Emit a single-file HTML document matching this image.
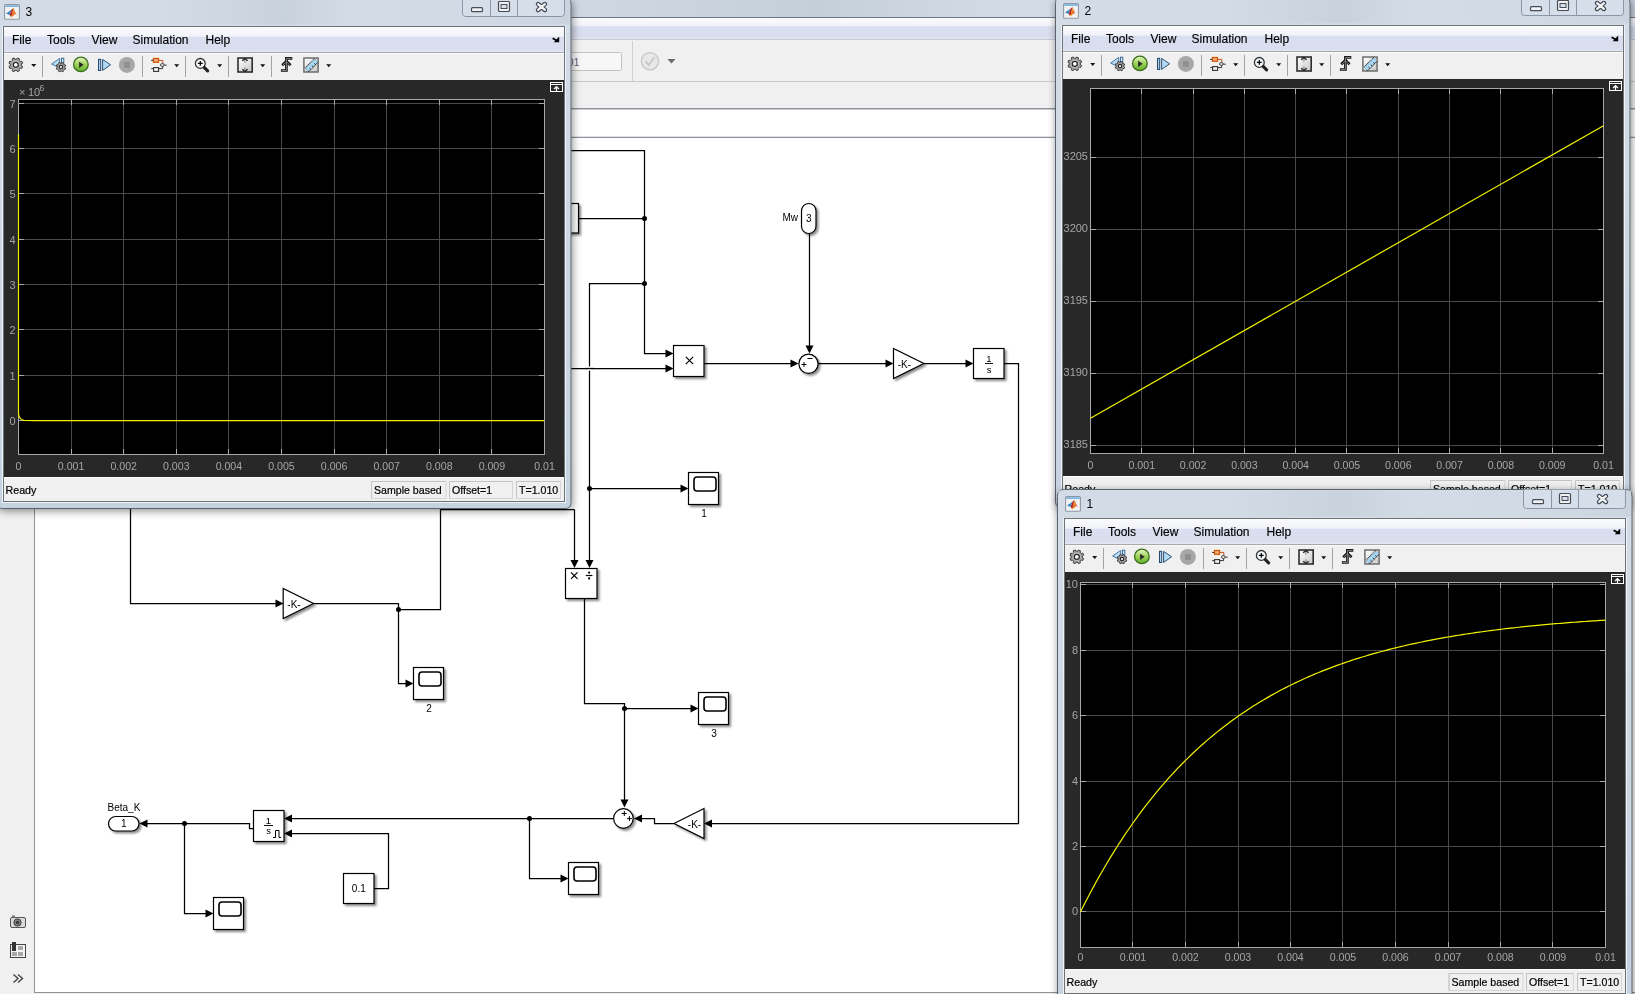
<!DOCTYPE html><html><head><meta charset="utf-8"><style>html,body{margin:0;padding:0;overflow:hidden;background:#fff;}svg{display:block;will-change:transform;}</style></head><body><svg width="1635" height="994" viewBox="0 0 1635 994" shape-rendering="auto">
<defs>
<linearGradient id="gMenu" x1="0" y1="0" x2="0" y2="1">
 <stop offset="0" stop-color="#fbfbfd"/><stop offset="0.36" stop-color="#f1f3f9"/>
 <stop offset="0.42" stop-color="#d9dff0"/><stop offset="0.9" stop-color="#d9deef"/><stop offset="1" stop-color="#e4e7f3"/>
</linearGradient>
<linearGradient id="gAero" x1="0" y1="0" x2="1" y2="0">
 <stop offset="0" stop-color="#d3dce6"/><stop offset="0.3" stop-color="#d2dbe5"/><stop offset="0.5" stop-color="#c5cfda"/><stop offset="0.62" stop-color="#d3dce6"/><stop offset="0.85" stop-color="#d0d9e3"/><stop offset="1" stop-color="#c8d2dd"/>
</linearGradient>
<linearGradient id="gAeroV" x1="0" y1="0" x2="0" y2="1">
 <stop offset="0" stop-color="#d5dde7"/><stop offset="1" stop-color="#c6d2df"/>
</linearGradient>
<linearGradient id="gSide" x1="0" y1="0" x2="1" y2="0">
 <stop offset="0" stop-color="#c3d0df"/><stop offset="0.5" stop-color="#dbe4ee"/><stop offset="1" stop-color="#c7d3e1"/>
</linearGradient>
<linearGradient id="gPlay" x1="0" y1="0" x2="0" y2="1">
 <stop offset="0" stop-color="#e6f7c8"/><stop offset="0.5" stop-color="#9fd25a"/><stop offset="1" stop-color="#5fae2a"/>
</linearGradient>
<linearGradient id="gScale" x1="0" y1="0" x2="1" y2="1">
 <stop offset="0" stop-color="#ffffff"/><stop offset="1" stop-color="#c8c8c8"/>
</linearGradient>
<filter id="fBlk" x="-30%" y="-30%" width="170%" height="170%">
 <feGaussianBlur in="SourceAlpha" stdDeviation="1.3"/><feOffset dx="2" dy="2" result="o"/>
 <feComponentTransfer><feFuncA type="linear" slope="0.45"/></feComponentTransfer>
 <feMerge><feMergeNode/><feMergeNode in="SourceGraphic"/></feMerge>
</filter>
<filter id="fWin" x="-5%" y="-5%" width="110%" height="110%">
 <feGaussianBlur in="SourceAlpha" stdDeviation="4"/><feOffset dx="1" dy="2" result="o"/>
 <feComponentTransfer><feFuncA type="linear" slope="0.45"/></feComponentTransfer>
 <feMerge><feMergeNode/><feMergeNode in="SourceGraphic"/></feMerge>
</filter>
</defs>
<rect x="0" y="0" width="1635" height="994" fill="#ffffff" />
<rect x="0" y="0" width="1635" height="17" fill="url(#gAero)" />
<line x1="0" y1="17.5" x2="1635" y2="17.5" stroke="#6e7682" stroke-width="1"/>
<rect x="0" y="18" width="1635" height="21" fill="url(#gMenu)" />
<line x1="0" y1="39.5" x2="1635" y2="39.5" stroke="#c6c9d2" stroke-width="1"/>
<rect x="0" y="40" width="1635" height="41" fill="#f0f0f0" />
<line x1="0" y1="81.5" x2="1635" y2="81.5" stroke="#c9c9c9" stroke-width="1"/>
<rect x="0" y="82" width="1635" height="26" fill="#f0f0f0" />
<rect x="0" y="108" width="1635" height="1" fill="#8e949c" />
<rect x="0" y="109" width="1635" height="1" fill="#c6cace" />
<rect x="0" y="110" width="1635" height="27" fill="#ffffff" />
<rect x="0" y="136" width="1635" height="1" fill="#dfe1e4" />
<rect x="0" y="137" width="1635" height="1" fill="#8e949c" />
<rect x="540.5" y="52.5" width="81" height="18" rx="2" fill="#f7f7f7" stroke="#c3c3c3"/>
<text x="567.5" y="66" font-family="Liberation Sans" font-size="11" fill="#6a5a7a" text-anchor="start" >01</text>
<line x1="632.5" y1="41" x2="632.5" y2="81" stroke="#cfcfcf" stroke-width="1"/>
<circle cx="650" cy="61.2" r="8.6" fill="#e8e8e8" stroke="#c4c4c4" stroke-width="1.2"/>
<path d="M645.5,61.5 L648.8,65 L654.5,57.2" fill="none" stroke="#c9c9c9" stroke-width="2"/>
<path d="M667.5,59 L675.5,59 L671.5,63.5 Z" fill="#6a6a6a"/>
<rect x="0" y="138" width="34" height="856" fill="#f0f0f0" />
<line x1="34.5" y1="138" x2="34.5" y2="993" stroke="#8e949c" stroke-width="1"/>
<line x1="34" y1="992.5" x2="1635" y2="992.5" stroke="#8e949c" stroke-width="1"/>
<rect x="0" y="993" width="1635" height="1" fill="#f0f0f0" />
<g transform="translate(10,915)"><rect x="0.5" y="2.5" width="15" height="10" rx="1.5" fill="#d9d9d9" stroke="#555"/><rect x="2" y="0.5" width="3" height="2" fill="#777"/><circle cx="7.5" cy="7.5" r="3.6" fill="#8a8a8a" stroke="#333"/><circle cx="7.5" cy="7.5" r="1.8" fill="#3a3a3a"/></g>
<g transform="translate(10,942)"><rect x="0.5" y="2.5" width="15" height="13" fill="#f4f4f4" stroke="#444"/><rect x="2" y="0" width="4" height="9" fill="#333"/><rect x="8" y="4" width="5" height="4" fill="#a8a8a8"/><rect x="2" y="10" width="5" height="4" fill="#a8a8a8"/><rect x="8" y="10" width="5" height="4" fill="#a8a8a8"/></g>
<path d="M13.5,974.5 L18,978.5 L13.5,982.5 M18,974.5 L22.5,978.5 L18,982.5" fill="none" stroke="#444" stroke-width="1.4"/>
<path d="M560,150.5 L644.5,150.5 L644.5,353.5 L667,353.5" fill="none" stroke="#000" stroke-width="1.25" stroke-linejoin="miter"/>
<polygon points="673.5,353.5 665.5,349.5 665.5,357.5" fill="#000"/>
<path d="M578,218.5 L644.5,218.5" fill="none" stroke="#000" stroke-width="1.25" stroke-linejoin="miter"/>
<circle cx="644.5" cy="218.5" r="2.5" fill="#000"/>
<path d="M644.5,283.5 L589.5,283.5 L589.5,561" fill="none" stroke="#000" stroke-width="1.25" stroke-linejoin="miter"/>
<circle cx="644.5" cy="283.5" r="2.5" fill="#000"/>
<polygon points="589.5,568 585.5,560 593.5,560" fill="#000"/>
<path d="M560,368.5 L667,368.5" fill="none" stroke="#000" stroke-width="1.25" stroke-linejoin="miter"/>
<polygon points="673.5,368.5 665.5,364.5 665.5,372.5" fill="#000"/>
<rect x="588.2" y="366.4" width="2.6" height="4.2" fill="#fff"/>
<path d="M585,368.5 L594,368.5" fill="none" stroke="#000" stroke-width="1.25" stroke-linejoin="miter"/>
<path d="M589.5,488.5 L682,488.5" fill="none" stroke="#000" stroke-width="1.25" stroke-linejoin="miter"/>
<circle cx="589.5" cy="488.5" r="2.5" fill="#000"/>
<polygon points="688.5,488.5 680.5,484.5 680.5,492.5" fill="#000"/>
<path d="M704,363.5 L792,363.5" fill="none" stroke="#000" stroke-width="1.25" stroke-linejoin="miter"/>
<polygon points="798.5,363.5 790.5,359.5 790.5,367.5" fill="#000"/>
<path d="M809.5,233 L809.5,346" fill="none" stroke="#000" stroke-width="1.25" stroke-linejoin="miter"/>
<polygon points="809.5,353.5 805.5,345.5 813.5,345.5" fill="#000"/>
<path d="M818,363.5 L886.5,363.5" fill="none" stroke="#000" stroke-width="1.25" stroke-linejoin="miter"/>
<polygon points="893.5,363.5 885.5,359.5 885.5,367.5" fill="#000"/>
<path d="M924,363.5 L966.5,363.5" fill="none" stroke="#000" stroke-width="1.25" stroke-linejoin="miter"/>
<polygon points="973.5,363.5 965.5,359.5 965.5,367.5" fill="#000"/>
<path d="M1004,363.5 L1018.5,363.5 L1018.5,823.5 L711,823.5" fill="none" stroke="#000" stroke-width="1.25" stroke-linejoin="miter"/>
<polygon points="704,823.5 712,819.5 712,827.5" fill="#000"/>
<path d="M674,823.5 L654.5,823.5 L654.5,818.5 L641,818.5" fill="none" stroke="#000" stroke-width="1.25" stroke-linejoin="miter"/>
<polygon points="634,818.5 642,814.5 642,822.5" fill="#000"/>
<path d="M574.5,509.5 L574.5,561" fill="none" stroke="#000" stroke-width="1.25" stroke-linejoin="miter"/>
<polygon points="574.5,568 570.5,560 578.5,560" fill="#000"/>
<path d="M440.5,509.5 L574.5,509.5" fill="none" stroke="#000" stroke-width="1.25" stroke-linejoin="miter"/>
<path d="M584.5,598 L584.5,703.5 L624.5,703.5 L624.5,800" fill="none" stroke="#000" stroke-width="1.25" stroke-linejoin="miter"/>
<polygon points="624.5,807.5 620.5,799.5 628.5,799.5" fill="#000"/>
<path d="M624.5,708.5 L692,708.5" fill="none" stroke="#000" stroke-width="1.25" stroke-linejoin="miter"/>
<circle cx="624.5" cy="708.5" r="2.5" fill="#000"/>
<polygon points="698.5,708.5 690.5,704.5 690.5,712.5" fill="#000"/>
<path d="M613,818.5 L291,818.5" fill="none" stroke="#000" stroke-width="1.25" stroke-linejoin="miter"/>
<polygon points="284,818.5 292,814.5 292,822.5" fill="#000"/>
<path d="M529.5,818.5 L529.5,878.5 L561.5,878.5" fill="none" stroke="#000" stroke-width="1.25" stroke-linejoin="miter"/>
<circle cx="529.5" cy="818.5" r="2.5" fill="#000"/>
<polygon points="568.5,878.5 560.5,874.5 560.5,882.5" fill="#000"/>
<path d="M374,888.5 L388.5,888.5 L388.5,833.5 L291,833.5" fill="none" stroke="#000" stroke-width="1.25" stroke-linejoin="miter"/>
<polygon points="284,833.5 292,829.5 292,837.5" fill="#000"/>
<path d="M254,828.5 L249.5,828.5 L249.5,823.5 L146.5,823.5" fill="none" stroke="#000" stroke-width="1.25" stroke-linejoin="miter"/>
<polygon points="139.5,823.5 147.5,819.5 147.5,827.5" fill="#000"/>
<path d="M184.5,823.5 L184.5,913.5 L206.5,913.5" fill="none" stroke="#000" stroke-width="1.25" stroke-linejoin="miter"/>
<circle cx="184.5" cy="823.5" r="2.5" fill="#000"/>
<polygon points="213.5,913.5 205.5,909.5 205.5,917.5" fill="#000"/>
<path d="M130.5,509 L130.5,603.5 L276.5,603.5" fill="none" stroke="#000" stroke-width="1.25" stroke-linejoin="miter"/>
<polygon points="283.5,603.5 275.5,599.5 275.5,607.5" fill="#000"/>
<path d="M313.5,603.5 L398.5,603.5 L398.5,683.5 L406.5,683.5" fill="none" stroke="#000" stroke-width="1.25" stroke-linejoin="miter"/>
<polygon points="413.5,683.5 405.5,679.5 405.5,687.5" fill="#000"/>
<path d="M398.5,609.5 L440.5,609.5 L440.5,509" fill="none" stroke="#000" stroke-width="1.25" stroke-linejoin="miter"/>
<circle cx="398.5" cy="609.5" r="2.5" fill="#000"/>
<g filter="url(#fBlk)"><rect x="540" y="203.5" width="38.5" height="29.5" fill="#fff" stroke="#000" stroke-width="1.2"/></g>
<g filter="url(#fBlk)"><rect x="673.5" y="345.5" width="30.5" height="31.0" fill="#fff" stroke="#000" stroke-width="1.2"/></g>
<path d="M685.8,356.8 L693.2,364.2 M693.2,356.8 L685.8,364.2" stroke="#000" stroke-width="1.2"/>
<g filter="url(#fBlk)"><rect x="801.5" y="203.5" width="14.5" height="30" rx="7.25" ry="7.25" fill="#fff" stroke="#000" stroke-width="1.2"/></g>
<text x="808.75" y="222.1" font-family="Liberation Sans" font-size="10" fill="#000" text-anchor="middle" >3</text>
<text x="798" y="221" font-family="Liberation Sans" font-size="10" fill="#000" text-anchor="end" >Mw</text>
<g filter="url(#fBlk)"><circle cx="808.5" cy="363.8" r="9.6" fill="#fff" stroke="#000" stroke-width="1.2"/></g>
<path d="M801.5,364.5 L806.5,364.5 M804,362.0 L804,367.0" stroke="#000" stroke-width="1"/>
<path d="M807.5,358.5 L812.5,358.5" stroke="#000" stroke-width="1"/>
<g filter="url(#fBlk)"><polygon points="893.5,348.5 923.8,363.5 893.5,378.5" fill="#fff" stroke="#000" stroke-width="1.2" stroke-linejoin="miter"/></g>
<text x="904.3" y="367.5" font-family="Liberation Sans" font-size="10" fill="#000" text-anchor="middle" >-K-</text>
<g filter="url(#fBlk)"><rect x="973.5" y="348.5" width="30.5" height="30.0" fill="#fff" stroke="#000" stroke-width="1.2"/></g>
<text x="989" y="362" font-family="Liberation Sans" font-size="9.5" fill="#000" text-anchor="middle" >1</text>
<line x1="985" y1="363.5" x2="993" y2="363.5" stroke="#111" stroke-width="1"/>
<text x="989" y="373" font-family="Liberation Sans" font-size="9.5" fill="#000" text-anchor="middle" >s</text>
<g filter="url(#fBlk)"><rect x="688.5" y="472.5" width="30.0" height="32.0" fill="#fff" stroke="#000" stroke-width="1.2"/></g>
<rect x="694.0" y="477.0" width="22" height="14" rx="3" fill="#fff" stroke="#000" stroke-width="1.6"/>
<text x="704.0" y="517.0" font-family="Liberation Sans" font-size="10" fill="#000" text-anchor="middle" >1</text>
<g filter="url(#fBlk)"><rect x="565.5" y="568.5" width="31.5" height="30.0" fill="#fff" stroke="#000" stroke-width="1.2"/></g>
<path d="M571,572.3 L577.5,578.8 M577.5,572.3 L571,578.8" stroke="#000" stroke-width="1.2"/>
<path d="M585.8,575.5 L592.4,575.5" stroke="#000" stroke-width="1.2"/><circle cx="589.1" cy="572.6" r="1.1"/><circle cx="589.1" cy="578.4" r="1.1"/>
<g filter="url(#fBlk)"><rect x="698.5" y="692.5" width="30.0" height="32.0" fill="#fff" stroke="#000" stroke-width="1.2"/></g>
<rect x="704.0" y="697.0" width="22" height="14" rx="3" fill="#fff" stroke="#000" stroke-width="1.6"/>
<text x="714.0" y="737.0" font-family="Liberation Sans" font-size="10" fill="#000" text-anchor="middle" >3</text>
<g filter="url(#fBlk)"><circle cx="623.4" cy="818.5" r="9.8" fill="#fff" stroke="#000" stroke-width="1.2"/></g>
<path d="M621.8,813.5 L626.8,813.5 M624.3,811.0 L624.3,816.0" stroke="#000" stroke-width="1"/>
<path d="M626.9,818.6 L631.9,818.6 M629.4,816.1 L629.4,821.1" stroke="#000" stroke-width="1"/>
<g filter="url(#fBlk)"><polygon points="704,808.5 674,823.5 704,838.5" fill="#fff" stroke="#000" stroke-width="1.2" stroke-linejoin="miter"/></g>
<text x="694.5" y="827.5" font-family="Liberation Sans" font-size="10" fill="#000" text-anchor="middle" >-K-</text>
<g filter="url(#fBlk)"><rect x="568.5" y="862.5" width="30.0" height="32.0" fill="#fff" stroke="#000" stroke-width="1.2"/></g>
<rect x="574.0" y="867.0" width="22" height="14" rx="3" fill="#fff" stroke="#000" stroke-width="1.6"/>
<g filter="url(#fBlk)"><rect x="253.5" y="810.5" width="30.5" height="31.0" fill="#fff" stroke="#000" stroke-width="1.2"/></g>
<text x="268.5" y="824" font-family="Liberation Sans" font-size="9.5" fill="#000" text-anchor="middle" >1</text>
<line x1="264" y1="825.5" x2="273" y2="825.5" stroke="#111" stroke-width="1"/>
<text x="268.5" y="834" font-family="Liberation Sans" font-size="9.5" fill="#000" text-anchor="middle" >s</text>
<path d="M273,837.5 L275.5,837.5 L275.5,830.5 L279,830.5 L279,837.5 L281,837.5" fill="none" stroke="#000" stroke-width="1"/>
<g filter="url(#fBlk)"><rect x="343.5" y="873.5" width="30.5" height="30.0" fill="#fff" stroke="#000" stroke-width="1.2"/></g>
<text x="358.8" y="891.5" font-family="Liberation Sans" font-size="10" fill="#000" text-anchor="middle" >0.1</text>
<g filter="url(#fBlk)"><rect x="213.5" y="897.5" width="30.0" height="32.0" fill="#fff" stroke="#000" stroke-width="1.2"/></g>
<rect x="219.0" y="902.0" width="22" height="14" rx="3" fill="#fff" stroke="#000" stroke-width="1.6"/>
<g filter="url(#fBlk)"><rect x="108.5" y="816.5" width="30.5" height="14.5" rx="7.25" ry="7.25" fill="#fff" stroke="#000" stroke-width="1.2"/></g>
<text x="123.75" y="827.35" font-family="Liberation Sans" font-size="10" fill="#000" text-anchor="middle" >1</text>
<text x="107.5" y="810.5" font-family="Liberation Sans" font-size="10" fill="#000" text-anchor="start" >Beta_K</text>
<g filter="url(#fBlk)"><rect x="413.5" y="667.5" width="30.0" height="32.0" fill="#fff" stroke="#000" stroke-width="1.2"/></g>
<rect x="419.0" y="672.0" width="22" height="14" rx="3" fill="#fff" stroke="#000" stroke-width="1.6"/>
<text x="429.0" y="712.0" font-family="Liberation Sans" font-size="10" fill="#000" text-anchor="middle" >2</text>
<g filter="url(#fBlk)"><polygon points="283.2,588.5 313.5,603.5 283.2,618.5" fill="#fff" stroke="#000" stroke-width="1.2" stroke-linejoin="miter"/></g>
<text x="294.0" y="607.5" font-family="Liberation Sans" font-size="10" fill="#000" text-anchor="middle" >-K-</text>
<g filter="url(#fWin)"><path d="M-3.5,502.5 L-3.5,4.5 Q-3.5,-2.5 3.5,-2.5 L564,-2.5 Q571,-2.5 571,4.5 L571,502.5 Q571,508.5 565,508.5 L2.5,508.5 Q-3.5,508.5 -3.5,502.5 Z" fill="url(#gAeroV)" stroke="#59626e" stroke-width="1"/></g>
<rect x="-2.5" y="-1.5" width="572.5" height="26" fill="url(#gAero)" opacity="0.8"/>
<rect x="2.5" y="26.5" width="563" height="476" fill="none" stroke="#eef3f8" stroke-width="1"/>
<g transform="translate(4,4)"><rect x="0.6" y="0.6" width="14.8" height="14.6" rx="1" fill="#f2f2f2" stroke="#8e98a4" stroke-width="1.1"/><rect x="1.2" y="1.2" width="13.6" height="1.8" fill="#7fb6e2"/><path d="M2,9.5 L7.5,5.8 L5.6,10.9 Z" fill="#3b86c8"/><path d="M7.5,5.8 L9.5,4 L8.6,8.2 L7.3,13.3 L5.6,10.9 Z" fill="#b8281c"/><path d="M9.5,4 L11.2,9.8 L9.6,11.6 L7.3,13.3 L8.6,8.2 Z" fill="#e8731f"/><path d="M9.5,4 L12.7,11.7 L11.2,9.8 Z" fill="#d0402a"/><path d="M9.4,4.6 L10,7.5 L9.2,8.5 Z" fill="#f2c531"/><path d="M6.6,12.2 L7.3,13.3 L8.2,12 Z" fill="#f2b531"/></g>
<text x="25.5" y="15.5" font-family="Liberation Sans" font-size="12" fill="#000" text-anchor="start" >3</text>
<path d="M462.5,-2.5 L462.5,13.5 Q462.5,16.5 465.5,16.5 L561.5,16.5 Q564.5,16.5 564.5,13.5 L564.5,-2.5" fill="#d5dee9" stroke="#8a96a6" stroke-width="1"/>
<line x1="490.5" y1="-2.5" x2="490.5" y2="16.5" stroke="#8a96a6" stroke-width="1"/>
<line x1="517.5" y1="-2.5" x2="517.5" y2="16.5" stroke="#8a96a6" stroke-width="1"/>
<rect x="471.5" y="7.699999999999999" width="11" height="4" rx="1" fill="#f2f2f2" stroke="#454c5a" stroke-width="1.2"/>
<rect x="498.5" y="1.5" width="11" height="10" rx="1" fill="#f2f2f2" stroke="#454c5a" stroke-width="1.2"/>
<rect x="501" y="4.5" width="6" height="4" fill="#d5dee9" stroke="#454c5a" stroke-width="1"/>
<path d="M538.1,4.1 L544.9,9.9 M544.9,4.1 L538.1,9.9" stroke="#454c5a" stroke-width="4.6" stroke-linecap="round"/>
<path d="M538.1,4.1 L544.9,9.9 M544.9,4.1 L538.1,9.9" stroke="#f4f4f4" stroke-width="2.2" stroke-linecap="round"/>
<rect x="3" y="26" width="562" height="476" fill="#6e7378" />
<rect x="4" y="27" width="560" height="25" fill="url(#gMenu)" />
<rect x="4" y="52" width="560" height="1" fill="#a8a8a8" />
<rect x="4" y="53" width="560" height="27" fill="#f0f0f0" />
<rect x="4" y="53" width="560" height="1" fill="#fafafa" />
<rect x="4" y="80" width="560" height="397" fill="#282828" />
<rect x="4" y="477" width="560" height="24" fill="#f0f0f0" />
<rect x="4" y="477" width="560" height="1" fill="#fdfdfd" />
<text x="12" y="44" font-family="Liberation Sans" font-size="12" fill="#000" text-anchor="start" stroke="#000" stroke-width="0.15">File</text>
<text x="47" y="44" font-family="Liberation Sans" font-size="12" fill="#000" text-anchor="start" stroke="#000" stroke-width="0.15">Tools</text>
<text x="91.5" y="44" font-family="Liberation Sans" font-size="12" fill="#000" text-anchor="start" stroke="#000" stroke-width="0.15">View</text>
<text x="132.5" y="44" font-family="Liberation Sans" font-size="12" fill="#000" text-anchor="start" stroke="#000" stroke-width="0.15">Simulation</text>
<text x="205.5" y="44" font-family="Liberation Sans" font-size="12" fill="#000" text-anchor="start" stroke="#000" stroke-width="0.15">Help</text>
<path d="M552.6,38.2 L557.6,41" stroke="#000" stroke-width="1.7"/><path d="M559.2,36.6 L559.2,42.2 L553.8,42.2 Z" fill="#000"/>
<path d="M21.40,64.80 L21.31,65.81 L22.62,66.38 L21.74,68.50 L20.41,67.98 L19.76,68.76 L18.98,69.41 L19.50,70.74 L17.38,71.62 L16.81,70.31 L15.80,70.40 L14.79,70.31 L14.22,71.62 L12.10,70.74 L12.62,69.41 L11.84,68.76 L11.19,67.98 L9.86,68.50 L8.98,66.38 L10.29,65.81 L10.20,64.80 L10.29,63.79 L8.98,63.22 L9.86,61.10 L11.19,61.62 L11.84,60.84 L12.62,60.19 L12.10,58.86 L14.22,57.98 L14.79,59.29 L15.80,59.20 L16.81,59.29 L17.38,57.98 L19.50,58.86 L18.98,60.19 L19.76,60.84 L20.41,61.62 L21.74,61.10 L22.62,63.22 L21.31,63.79 Z" fill="#a9a9a9" stroke="#3a3a3a" stroke-width="1" stroke-linejoin="round"/>
<circle cx="15.8" cy="64.8" r="4.2" fill="#d4d4d4" stroke="#8a8a8a" stroke-width="0.6"/>
<circle cx="15.8" cy="64.8" r="2.52" fill="#ffffff" stroke="#262626" stroke-width="1.3"/>
<path d="M31.2,64 L36.2,64 L33.7,67 Z" fill="#111"/>
<line x1="42.5" y1="56" x2="42.5" y2="77" stroke="#a3a3a3" stroke-width="1"/>
<line x1="142.5" y1="56" x2="142.5" y2="77" stroke="#a3a3a3" stroke-width="1"/>
<line x1="185.5" y1="56" x2="185.5" y2="77" stroke="#a3a3a3" stroke-width="1"/>
<line x1="228.5" y1="56" x2="228.5" y2="77" stroke="#a3a3a3" stroke-width="1"/>
<line x1="271.5" y1="56" x2="271.5" y2="77" stroke="#a3a3a3" stroke-width="1"/>
<path d="M51.6,64 L59.7,58.4 L59.7,68 Z" fill="#b6dcf3" stroke="#4a7aa6" stroke-width="1" stroke-linejoin="round"/>
<rect x="61.4" y="58.2" width="2.4" height="7" fill="#cfe8f7" stroke="#2f5f8c" stroke-width="0.9"/>
<path d="M64.84,67.10 L64.78,67.79 L65.68,68.18 L65.07,69.64 L64.16,69.28 L63.72,69.82 L63.18,70.26 L63.54,71.17 L62.08,71.78 L61.69,70.88 L61.00,70.94 L60.31,70.88 L59.92,71.78 L58.46,71.17 L58.82,70.26 L58.28,69.82 L57.84,69.28 L56.93,69.64 L56.32,68.18 L57.22,67.79 L57.16,67.10 L57.22,66.41 L56.32,66.02 L56.93,64.56 L57.84,64.92 L58.28,64.38 L58.82,63.94 L58.46,63.03 L59.92,62.42 L60.31,63.32 L61.00,63.26 L61.69,63.32 L62.08,62.42 L63.54,63.03 L63.18,63.94 L63.72,64.38 L64.16,64.92 L65.07,64.56 L65.68,66.02 L64.78,66.41 Z" fill="#a9a9a9" stroke="#3a3a3a" stroke-width="1" stroke-linejoin="round"/>
<circle cx="61" cy="67.1" r="2.88" fill="#d4d4d4" stroke="#8a8a8a" stroke-width="0.6"/>
<circle cx="61" cy="67.1" r="1.728" fill="#ffffff" stroke="#262626" stroke-width="1.3"/>
<circle cx="80.9" cy="64.4" r="7.3" fill="url(#gPlay)" stroke="#3b6e1c" stroke-width="1.3"/>
<path d="M79.1,61.7 L83.6,64.8 L79.1,68.1 Z" fill="#262626"/>
<rect x="98.5" y="59.3" width="2.2" height="11.2" fill="#a9d3ef" stroke="#27476a" stroke-width="1"/>
<path d="M102.6,59.4 L110.6,64.8 L102.6,70.4 Z" fill="#b3daf3" stroke="#2c5278" stroke-width="1" stroke-linejoin="round"/>
<circle cx="126.9" cy="64.9" r="8" fill="#a7a7a7"/>
<rect x="124.1" y="62.1" width="5.8" height="5.8" fill="#8f8f8f"/>
<rect x="152.2" y="57.2" width="7.6" height="6.3" rx="1.5" fill="#fff1a8" opacity="0.8"/>
<rect x="153.5" y="58.5" width="5" height="3.8" fill="#f3b070" stroke="#c8501a" stroke-width="1.2"/>
<path d="M151.2,60.4 L153,60.4" stroke="#222" stroke-width="1"/>
<path d="M159,60.4 L162.8,60.4 L162.8,63.4" fill="none" stroke="#c8501a" stroke-width="1"/>
<rect x="160.6" y="63.7" width="3.5" height="2.6" rx="1.2" fill="#fff" stroke="#333" stroke-width="1"/>
<path d="M164.3,65.2 L166.7,65.2" stroke="#333" stroke-width="1"/>
<rect x="153.6" y="67.6" width="5" height="3.8" fill="#f4f4f4" stroke="#333" stroke-width="1.1"/>
<path d="M151.2,68.6 L153.2,68.6 M158.8,68.6 L162.6,68.6 L162.6,66.5" fill="none" stroke="#333" stroke-width="1"/>
<path d="M174.2,64.2 L179.2,64.2 L176.7,67.2 Z" fill="#111"/>
<circle cx="200.3" cy="63.4" r="4.9" fill="#f2f6fa" stroke="#333" stroke-width="1.3"/>
<path d="M197.9,63.4 L202.7,63.4 M200.3,61 L200.3,65.8" stroke="#000" stroke-width="1.2"/>
<path d="M204.4,67.7 L207.6,70.8" stroke="#222" stroke-width="3.2" stroke-linecap="round"/>
<path d="M217.2,64.2 L222.2,64.2 L219.7,67.2 Z" fill="#111"/>
<rect x="238" y="58" width="14.2" height="14" fill="url(#gScale)" stroke="#2e2e2e" stroke-width="1.6"/>
<path d="M244.9,59.2 L244.9,62.8 M244.9,67.2 L244.9,70.6" stroke="#8a8a8a" stroke-width="1.2"/>
<path d="M242.2,60.8 L244.9,58.4 L247.6,60.8 M242.2,69.2 L244.9,71.5 L247.6,69.2" fill="none" stroke="#222" stroke-width="1.3"/>
<path d="M260.2,64.2 L265.2,64.2 L262.7,67.2 Z" fill="#111"/>
<path d="M280.9,70.5 L286.4,70.5 L286.4,58.4 L292.3,58.4" fill="none" stroke="#111" stroke-width="2.7"/>
<path d="M282.2,65.2 L286.4,61.4 L290.6,65.2" fill="none" stroke="#111" stroke-width="2.7"/>
<path d="M281.6,70.5 L286.4,70.5 L286.4,58.4 L291.6,58.4 M282.9,65 L286.4,61.9 L289.9,65" fill="none" stroke="#8e8e96" stroke-width="0.9"/>
<rect x="303.9" y="58" width="14.2" height="14" fill="url(#gScale)" stroke="#6e6e6e" stroke-width="1.5"/>
<path d="M306.6,70 L316.6,60.2" stroke="#1e1e1e" stroke-width="6" stroke-dasharray="1 0.6"/>
<path d="M306.6,70 L316.6,60.2" stroke="#a6d6f1" stroke-width="4.4"/>
<path d="M309.5,68.2 L310.8,69.4 M311.9,65.8 L313.2,67 M314.3,63.4 L315.6,64.6" stroke="#222" stroke-width="0.9"/>
<path d="M326.2,64.2 L331.2,64.2 L328.7,67.2 Z" fill="#111"/>
<rect x="550.5" y="82.5" width="12" height="9" fill="none" stroke="#fff" stroke-width="1"/>
<path d="M551,84.5 L562,84.5" stroke="#fff"/><path d="M554,89 L556.5,86.5 L559,89 M556.5,87 L556.5,91" fill="none" stroke="#fff" stroke-width="1.2"/>
<rect x="18" y="99" width="527" height="356" fill="#000" />
<line x1="71.5" y1="99" x2="71.5" y2="455" stroke="#4a4a4a" stroke-width="1"/>
<line x1="123.5" y1="99" x2="123.5" y2="455" stroke="#4a4a4a" stroke-width="1"/>
<line x1="176.5" y1="99" x2="176.5" y2="455" stroke="#4a4a4a" stroke-width="1"/>
<line x1="228.5" y1="99" x2="228.5" y2="455" stroke="#4a4a4a" stroke-width="1"/>
<line x1="281.5" y1="99" x2="281.5" y2="455" stroke="#4a4a4a" stroke-width="1"/>
<line x1="334.5" y1="99" x2="334.5" y2="455" stroke="#4a4a4a" stroke-width="1"/>
<line x1="386.5" y1="99" x2="386.5" y2="455" stroke="#4a4a4a" stroke-width="1"/>
<line x1="439.5" y1="99" x2="439.5" y2="455" stroke="#4a4a4a" stroke-width="1"/>
<line x1="491.5" y1="99" x2="491.5" y2="455" stroke="#4a4a4a" stroke-width="1"/>
<line x1="18" y1="420.5" x2="545" y2="420.5" stroke="#4a4a4a" stroke-width="1"/>
<line x1="18" y1="375.5" x2="545" y2="375.5" stroke="#4a4a4a" stroke-width="1"/>
<line x1="18" y1="329.5" x2="545" y2="329.5" stroke="#4a4a4a" stroke-width="1"/>
<line x1="18" y1="284.5" x2="545" y2="284.5" stroke="#4a4a4a" stroke-width="1"/>
<line x1="18" y1="239.5" x2="545" y2="239.5" stroke="#4a4a4a" stroke-width="1"/>
<line x1="18" y1="193.5" x2="545" y2="193.5" stroke="#4a4a4a" stroke-width="1"/>
<line x1="18" y1="148.5" x2="545" y2="148.5" stroke="#4a4a4a" stroke-width="1"/>
<line x1="18" y1="103.5" x2="545" y2="103.5" stroke="#4a4a4a" stroke-width="1"/>
<rect x="18.5" y="99.5" width="526" height="355" fill="none" stroke="#a8a8a8" stroke-width="1"/>
<line x1="71.5" y1="454" x2="71.5" y2="449" stroke="#a8a8a8"/>
<line x1="71.5" y1="100" x2="71.5" y2="105" stroke="#a8a8a8"/>
<line x1="123.5" y1="454" x2="123.5" y2="449" stroke="#a8a8a8"/>
<line x1="123.5" y1="100" x2="123.5" y2="105" stroke="#a8a8a8"/>
<line x1="176.5" y1="454" x2="176.5" y2="449" stroke="#a8a8a8"/>
<line x1="176.5" y1="100" x2="176.5" y2="105" stroke="#a8a8a8"/>
<line x1="228.5" y1="454" x2="228.5" y2="449" stroke="#a8a8a8"/>
<line x1="228.5" y1="100" x2="228.5" y2="105" stroke="#a8a8a8"/>
<line x1="281.5" y1="454" x2="281.5" y2="449" stroke="#a8a8a8"/>
<line x1="281.5" y1="100" x2="281.5" y2="105" stroke="#a8a8a8"/>
<line x1="334.5" y1="454" x2="334.5" y2="449" stroke="#a8a8a8"/>
<line x1="334.5" y1="100" x2="334.5" y2="105" stroke="#a8a8a8"/>
<line x1="386.5" y1="454" x2="386.5" y2="449" stroke="#a8a8a8"/>
<line x1="386.5" y1="100" x2="386.5" y2="105" stroke="#a8a8a8"/>
<line x1="439.5" y1="454" x2="439.5" y2="449" stroke="#a8a8a8"/>
<line x1="439.5" y1="100" x2="439.5" y2="105" stroke="#a8a8a8"/>
<line x1="491.5" y1="454" x2="491.5" y2="449" stroke="#a8a8a8"/>
<line x1="491.5" y1="100" x2="491.5" y2="105" stroke="#a8a8a8"/>
<line x1="19" y1="420.5" x2="24" y2="420.5" stroke="#a8a8a8"/>
<line x1="544" y1="420.5" x2="539" y2="420.5" stroke="#a8a8a8"/>
<line x1="19" y1="375.5" x2="24" y2="375.5" stroke="#a8a8a8"/>
<line x1="544" y1="375.5" x2="539" y2="375.5" stroke="#a8a8a8"/>
<line x1="19" y1="329.5" x2="24" y2="329.5" stroke="#a8a8a8"/>
<line x1="544" y1="329.5" x2="539" y2="329.5" stroke="#a8a8a8"/>
<line x1="19" y1="284.5" x2="24" y2="284.5" stroke="#a8a8a8"/>
<line x1="544" y1="284.5" x2="539" y2="284.5" stroke="#a8a8a8"/>
<line x1="19" y1="239.5" x2="24" y2="239.5" stroke="#a8a8a8"/>
<line x1="544" y1="239.5" x2="539" y2="239.5" stroke="#a8a8a8"/>
<line x1="19" y1="193.5" x2="24" y2="193.5" stroke="#a8a8a8"/>
<line x1="544" y1="193.5" x2="539" y2="193.5" stroke="#a8a8a8"/>
<line x1="19" y1="148.5" x2="24" y2="148.5" stroke="#a8a8a8"/>
<line x1="544" y1="148.5" x2="539" y2="148.5" stroke="#a8a8a8"/>
<line x1="19" y1="103.5" x2="24" y2="103.5" stroke="#a8a8a8"/>
<line x1="544" y1="103.5" x2="539" y2="103.5" stroke="#a8a8a8"/>
<path d="M18.5,134.3 L18.5,414 Q19.2,419.6 24,420.3 L35,420.6 L544,420.6" fill="none" stroke="#f2f200" stroke-width="1.2"/>
<text x="18.5" y="469.5" font-family="Liberation Sans" font-size="10.6" fill="#a5a5a5" text-anchor="middle" >0</text>
<text x="71.1" y="469.5" font-family="Liberation Sans" font-size="10.6" fill="#a5a5a5" text-anchor="middle" >0.001</text>
<text x="123.7" y="469.5" font-family="Liberation Sans" font-size="10.6" fill="#a5a5a5" text-anchor="middle" >0.002</text>
<text x="176.3" y="469.5" font-family="Liberation Sans" font-size="10.6" fill="#a5a5a5" text-anchor="middle" >0.003</text>
<text x="228.9" y="469.5" font-family="Liberation Sans" font-size="10.6" fill="#a5a5a5" text-anchor="middle" >0.004</text>
<text x="281.5" y="469.5" font-family="Liberation Sans" font-size="10.6" fill="#a5a5a5" text-anchor="middle" >0.005</text>
<text x="334.1" y="469.5" font-family="Liberation Sans" font-size="10.6" fill="#a5a5a5" text-anchor="middle" >0.006</text>
<text x="386.7" y="469.5" font-family="Liberation Sans" font-size="10.6" fill="#a5a5a5" text-anchor="middle" >0.007</text>
<text x="439.3" y="469.5" font-family="Liberation Sans" font-size="10.6" fill="#a5a5a5" text-anchor="middle" >0.008</text>
<text x="491.9" y="469.5" font-family="Liberation Sans" font-size="10.6" fill="#a5a5a5" text-anchor="middle" >0.009</text>
<text x="544.5" y="469.5" font-family="Liberation Sans" font-size="10.6" fill="#a5a5a5" text-anchor="middle" >0.01</text>
<text x="15.5" y="425.0" font-family="Liberation Sans" font-size="11" fill="#a5a5a5" text-anchor="end" >0</text>
<text x="15.5" y="380.0" font-family="Liberation Sans" font-size="11" fill="#a5a5a5" text-anchor="end" >1</text>
<text x="15.5" y="334.0" font-family="Liberation Sans" font-size="11" fill="#a5a5a5" text-anchor="end" >2</text>
<text x="15.5" y="289.0" font-family="Liberation Sans" font-size="11" fill="#a5a5a5" text-anchor="end" >3</text>
<text x="15.5" y="244.0" font-family="Liberation Sans" font-size="11" fill="#a5a5a5" text-anchor="end" >4</text>
<text x="15.5" y="198.0" font-family="Liberation Sans" font-size="11" fill="#a5a5a5" text-anchor="end" >5</text>
<text x="15.5" y="153.0" font-family="Liberation Sans" font-size="11" fill="#a5a5a5" text-anchor="end" >6</text>
<text x="15.5" y="108.0" font-family="Liberation Sans" font-size="11" fill="#a5a5a5" text-anchor="end" >7</text>
<text x="19" y="96" font-family="Liberation Sans" font-size="11" fill="#a5a5a5" text-anchor="start" >×</text>
<text x="28" y="96" font-family="Liberation Sans" font-size="11" fill="#a5a5a5" text-anchor="start" >10</text>
<text x="39.6" y="90.6" font-family="Liberation Sans" font-size="8.6" fill="#a5a5a5" text-anchor="start" >6</text>
<text x="5.5" y="493.6" font-family="Liberation Sans" font-size="10.7" fill="#000" text-anchor="start" stroke="#000" stroke-width="0.2">Ready</text>
<rect x="371.5" y="481.5" width="74.5" height="17" fill="#f0f0f0" stroke="#d5d5d5"/>
<path d="M371.5,498.5 L371.5,481.5 L446.0,481.5" fill="none" stroke="#c4c4c4"/>
<text x="374" y="494" font-family="Liberation Sans" font-size="10.6" fill="#000" text-anchor="start" stroke="#000" stroke-width="0.2">Sample based</text>
<rect x="449.5" y="481.5" width="63" height="17" fill="#f0f0f0" stroke="#d5d5d5"/>
<path d="M449.5,498.5 L449.5,481.5 L512.5,481.5" fill="none" stroke="#c4c4c4"/>
<text x="452" y="494" font-family="Liberation Sans" font-size="10.6" fill="#000" text-anchor="start" stroke="#000" stroke-width="0.2">Offset=1</text>
<rect x="516.5" y="481.5" width="44" height="17" fill="#f0f0f0" stroke="#d5d5d5"/>
<path d="M516.5,498.5 L516.5,481.5 L560.5,481.5" fill="none" stroke="#c4c4c4"/>
<text x="519" y="494" font-family="Liberation Sans" font-size="10.6" fill="#000" text-anchor="start" stroke="#000" stroke-width="0.2">T=1.010</text>
<g filter="url(#fWin)"><path d="M1055.5,501.5 L1055.5,3.5 Q1055.5,-3.5 1062.5,-3.5 L1623,-3.5 Q1630,-3.5 1630,3.5 L1630,501.5 Q1630,507.5 1624,507.5 L1061.5,507.5 Q1055.5,507.5 1055.5,501.5 Z" fill="url(#gAeroV)" stroke="#59626e" stroke-width="1"/></g>
<rect x="1056.5" y="-2.5" width="572.5" height="26" fill="url(#gAero)" opacity="0.8"/>
<rect x="1061.5" y="25.5" width="563" height="476" fill="none" stroke="#eef3f8" stroke-width="1"/>
<g transform="translate(1063,3)"><rect x="0.6" y="0.6" width="14.8" height="14.6" rx="1" fill="#f2f2f2" stroke="#8e98a4" stroke-width="1.1"/><rect x="1.2" y="1.2" width="13.6" height="1.8" fill="#7fb6e2"/><path d="M2,9.5 L7.5,5.8 L5.6,10.9 Z" fill="#3b86c8"/><path d="M7.5,5.8 L9.5,4 L8.6,8.2 L7.3,13.3 L5.6,10.9 Z" fill="#b8281c"/><path d="M9.5,4 L11.2,9.8 L9.6,11.6 L7.3,13.3 L8.6,8.2 Z" fill="#e8731f"/><path d="M9.5,4 L12.7,11.7 L11.2,9.8 Z" fill="#d0402a"/><path d="M9.4,4.6 L10,7.5 L9.2,8.5 Z" fill="#f2c531"/><path d="M6.6,12.2 L7.3,13.3 L8.2,12 Z" fill="#f2b531"/></g>
<text x="1084.5" y="14.5" font-family="Liberation Sans" font-size="12" fill="#000" text-anchor="start" >2</text>
<path d="M1521.5,-3.5 L1521.5,12.5 Q1521.5,15.5 1524.5,15.5 L1620.5,15.5 Q1623.5,15.5 1623.5,12.5 L1623.5,-3.5" fill="#d5dee9" stroke="#8a96a6" stroke-width="1"/>
<line x1="1549.5" y1="-3.5" x2="1549.5" y2="15.5" stroke="#8a96a6" stroke-width="1"/>
<line x1="1576.5" y1="-3.5" x2="1576.5" y2="15.5" stroke="#8a96a6" stroke-width="1"/>
<rect x="1530.5" y="6.699999999999999" width="11" height="4" rx="1" fill="#f2f2f2" stroke="#454c5a" stroke-width="1.2"/>
<rect x="1557.5" y="0.5" width="11" height="10" rx="1" fill="#f2f2f2" stroke="#454c5a" stroke-width="1.2"/>
<rect x="1560" y="3.5" width="6" height="4" fill="#d5dee9" stroke="#454c5a" stroke-width="1"/>
<path d="M1597.1,3.1 L1603.9,8.9 M1603.9,3.1 L1597.1,8.9" stroke="#454c5a" stroke-width="4.6" stroke-linecap="round"/>
<path d="M1597.1,3.1 L1603.9,8.9 M1603.9,3.1 L1597.1,8.9" stroke="#f4f4f4" stroke-width="2.2" stroke-linecap="round"/>
<rect x="1062" y="25" width="562" height="476" fill="#6e7378" />
<rect x="1063" y="26" width="560" height="25" fill="url(#gMenu)" />
<rect x="1063" y="51" width="560" height="1" fill="#a8a8a8" />
<rect x="1063" y="52" width="560" height="27" fill="#f0f0f0" />
<rect x="1063" y="52" width="560" height="1" fill="#fafafa" />
<rect x="1063" y="79" width="560" height="397" fill="#282828" />
<rect x="1063" y="476" width="560" height="24" fill="#f0f0f0" />
<rect x="1063" y="476" width="560" height="1" fill="#fdfdfd" />
<text x="1071" y="43" font-family="Liberation Sans" font-size="12" fill="#000" text-anchor="start" stroke="#000" stroke-width="0.15">File</text>
<text x="1106" y="43" font-family="Liberation Sans" font-size="12" fill="#000" text-anchor="start" stroke="#000" stroke-width="0.15">Tools</text>
<text x="1150.5" y="43" font-family="Liberation Sans" font-size="12" fill="#000" text-anchor="start" stroke="#000" stroke-width="0.15">View</text>
<text x="1191.5" y="43" font-family="Liberation Sans" font-size="12" fill="#000" text-anchor="start" stroke="#000" stroke-width="0.15">Simulation</text>
<text x="1264.5" y="43" font-family="Liberation Sans" font-size="12" fill="#000" text-anchor="start" stroke="#000" stroke-width="0.15">Help</text>
<path d="M1611.6,37.2 L1616.6,40" stroke="#000" stroke-width="1.7"/><path d="M1618.2,35.6 L1618.2,41.2 L1612.8,41.2 Z" fill="#000"/>
<path d="M1080.40,63.80 L1080.31,64.81 L1081.62,65.38 L1080.74,67.50 L1079.41,66.98 L1078.76,67.76 L1077.98,68.41 L1078.50,69.74 L1076.38,70.62 L1075.81,69.31 L1074.80,69.40 L1073.79,69.31 L1073.22,70.62 L1071.10,69.74 L1071.62,68.41 L1070.84,67.76 L1070.19,66.98 L1068.86,67.50 L1067.98,65.38 L1069.29,64.81 L1069.20,63.80 L1069.29,62.79 L1067.98,62.22 L1068.86,60.10 L1070.19,60.62 L1070.84,59.84 L1071.62,59.19 L1071.10,57.86 L1073.22,56.98 L1073.79,58.29 L1074.80,58.20 L1075.81,58.29 L1076.38,56.98 L1078.50,57.86 L1077.98,59.19 L1078.76,59.84 L1079.41,60.62 L1080.74,60.10 L1081.62,62.22 L1080.31,62.79 Z" fill="#a9a9a9" stroke="#3a3a3a" stroke-width="1" stroke-linejoin="round"/>
<circle cx="1074.8" cy="63.8" r="4.2" fill="#d4d4d4" stroke="#8a8a8a" stroke-width="0.6"/>
<circle cx="1074.8" cy="63.8" r="2.52" fill="#ffffff" stroke="#262626" stroke-width="1.3"/>
<path d="M1090.2,63 L1095.2,63 L1092.7,66 Z" fill="#111"/>
<line x1="1101.5" y1="55" x2="1101.5" y2="76" stroke="#a3a3a3" stroke-width="1"/>
<line x1="1201.5" y1="55" x2="1201.5" y2="76" stroke="#a3a3a3" stroke-width="1"/>
<line x1="1244.5" y1="55" x2="1244.5" y2="76" stroke="#a3a3a3" stroke-width="1"/>
<line x1="1287.5" y1="55" x2="1287.5" y2="76" stroke="#a3a3a3" stroke-width="1"/>
<line x1="1330.5" y1="55" x2="1330.5" y2="76" stroke="#a3a3a3" stroke-width="1"/>
<path d="M1110.6,63 L1118.7,57.4 L1118.7,67 Z" fill="#b6dcf3" stroke="#4a7aa6" stroke-width="1" stroke-linejoin="round"/>
<rect x="1120.4" y="57.2" width="2.4" height="7" fill="#cfe8f7" stroke="#2f5f8c" stroke-width="0.9"/>
<path d="M1123.84,66.10 L1123.78,66.79 L1124.68,67.18 L1124.07,68.64 L1123.16,68.28 L1122.72,68.82 L1122.18,69.26 L1122.54,70.17 L1121.08,70.78 L1120.69,69.88 L1120.00,69.94 L1119.31,69.88 L1118.92,70.78 L1117.46,70.17 L1117.82,69.26 L1117.28,68.82 L1116.84,68.28 L1115.93,68.64 L1115.32,67.18 L1116.22,66.79 L1116.16,66.10 L1116.22,65.41 L1115.32,65.02 L1115.93,63.56 L1116.84,63.92 L1117.28,63.38 L1117.82,62.94 L1117.46,62.03 L1118.92,61.42 L1119.31,62.32 L1120.00,62.26 L1120.69,62.32 L1121.08,61.42 L1122.54,62.03 L1122.18,62.94 L1122.72,63.38 L1123.16,63.92 L1124.07,63.56 L1124.68,65.02 L1123.78,65.41 Z" fill="#a9a9a9" stroke="#3a3a3a" stroke-width="1" stroke-linejoin="round"/>
<circle cx="1120" cy="66.1" r="2.88" fill="#d4d4d4" stroke="#8a8a8a" stroke-width="0.6"/>
<circle cx="1120" cy="66.1" r="1.728" fill="#ffffff" stroke="#262626" stroke-width="1.3"/>
<circle cx="1139.9" cy="63.4" r="7.3" fill="url(#gPlay)" stroke="#3b6e1c" stroke-width="1.3"/>
<path d="M1138.1,60.7 L1142.6,63.8 L1138.1,67.1 Z" fill="#262626"/>
<rect x="1157.5" y="58.3" width="2.2" height="11.2" fill="#a9d3ef" stroke="#27476a" stroke-width="1"/>
<path d="M1161.6,58.4 L1169.6,63.8 L1161.6,69.4 Z" fill="#b3daf3" stroke="#2c5278" stroke-width="1" stroke-linejoin="round"/>
<circle cx="1185.9" cy="63.9" r="8" fill="#a7a7a7"/>
<rect x="1183.1" y="61.1" width="5.8" height="5.8" fill="#8f8f8f"/>
<rect x="1211.2" y="56.2" width="7.6" height="6.3" rx="1.5" fill="#fff1a8" opacity="0.8"/>
<rect x="1212.5" y="57.5" width="5" height="3.8" fill="#f3b070" stroke="#c8501a" stroke-width="1.2"/>
<path d="M1210.2,59.4 L1212,59.4" stroke="#222" stroke-width="1"/>
<path d="M1218,59.4 L1221.8,59.4 L1221.8,62.4" fill="none" stroke="#c8501a" stroke-width="1"/>
<rect x="1219.6" y="62.7" width="3.5" height="2.6" rx="1.2" fill="#fff" stroke="#333" stroke-width="1"/>
<path d="M1223.3,64.2 L1225.7,64.2" stroke="#333" stroke-width="1"/>
<rect x="1212.6" y="66.6" width="5" height="3.8" fill="#f4f4f4" stroke="#333" stroke-width="1.1"/>
<path d="M1210.2,67.6 L1212.2,67.6 M1217.8,67.6 L1221.6,67.6 L1221.6,65.5" fill="none" stroke="#333" stroke-width="1"/>
<path d="M1233.2,63.2 L1238.2,63.2 L1235.7,66.2 Z" fill="#111"/>
<circle cx="1259.3" cy="62.4" r="4.9" fill="#f2f6fa" stroke="#333" stroke-width="1.3"/>
<path d="M1256.9,62.4 L1261.7,62.4 M1259.3,60 L1259.3,64.8" stroke="#000" stroke-width="1.2"/>
<path d="M1263.4,66.7 L1266.6,69.8" stroke="#222" stroke-width="3.2" stroke-linecap="round"/>
<path d="M1276.2,63.2 L1281.2,63.2 L1278.7,66.2 Z" fill="#111"/>
<rect x="1297" y="57" width="14.2" height="14" fill="url(#gScale)" stroke="#2e2e2e" stroke-width="1.6"/>
<path d="M1303.9,58.2 L1303.9,61.8 M1303.9,66.2 L1303.9,69.6" stroke="#8a8a8a" stroke-width="1.2"/>
<path d="M1301.2,59.8 L1303.9,57.4 L1306.6,59.8 M1301.2,68.2 L1303.9,70.5 L1306.6,68.2" fill="none" stroke="#222" stroke-width="1.3"/>
<path d="M1319.2,63.2 L1324.2,63.2 L1321.7,66.2 Z" fill="#111"/>
<path d="M1339.9,69.5 L1345.4,69.5 L1345.4,57.4 L1351.3,57.4" fill="none" stroke="#111" stroke-width="2.7"/>
<path d="M1341.2,64.2 L1345.4,60.4 L1349.6,64.2" fill="none" stroke="#111" stroke-width="2.7"/>
<path d="M1340.6,69.5 L1345.4,69.5 L1345.4,57.4 L1350.6,57.4 M1341.9,64 L1345.4,60.9 L1348.9,64" fill="none" stroke="#8e8e96" stroke-width="0.9"/>
<rect x="1362.9" y="57" width="14.2" height="14" fill="url(#gScale)" stroke="#6e6e6e" stroke-width="1.5"/>
<path d="M1365.6,69 L1375.6,59.2" stroke="#1e1e1e" stroke-width="6" stroke-dasharray="1 0.6"/>
<path d="M1365.6,69 L1375.6,59.2" stroke="#a6d6f1" stroke-width="4.4"/>
<path d="M1368.5,67.2 L1369.8,68.4 M1370.9,64.8 L1372.2,66 M1373.3,62.4 L1374.6,63.6" stroke="#222" stroke-width="0.9"/>
<path d="M1385.2,63.2 L1390.2,63.2 L1387.7,66.2 Z" fill="#111"/>
<rect x="1609.5" y="81.5" width="12" height="9" fill="none" stroke="#fff" stroke-width="1"/>
<path d="M1610,83.5 L1621,83.5" stroke="#fff"/><path d="M1613,88 L1615.5,85.5 L1618,88 M1615.5,86 L1615.5,90" fill="none" stroke="#fff" stroke-width="1.2"/>
<rect x="1090" y="88" width="514" height="366" fill="#000" />
<line x1="1141.5" y1="88" x2="1141.5" y2="454" stroke="#4a4a4a" stroke-width="1"/>
<line x1="1193.5" y1="88" x2="1193.5" y2="454" stroke="#4a4a4a" stroke-width="1"/>
<line x1="1244.5" y1="88" x2="1244.5" y2="454" stroke="#4a4a4a" stroke-width="1"/>
<line x1="1295.5" y1="88" x2="1295.5" y2="454" stroke="#4a4a4a" stroke-width="1"/>
<line x1="1346.5" y1="88" x2="1346.5" y2="454" stroke="#4a4a4a" stroke-width="1"/>
<line x1="1398.5" y1="88" x2="1398.5" y2="454" stroke="#4a4a4a" stroke-width="1"/>
<line x1="1449.5" y1="88" x2="1449.5" y2="454" stroke="#4a4a4a" stroke-width="1"/>
<line x1="1500.5" y1="88" x2="1500.5" y2="454" stroke="#4a4a4a" stroke-width="1"/>
<line x1="1552.5" y1="88" x2="1552.5" y2="454" stroke="#4a4a4a" stroke-width="1"/>
<line x1="1090" y1="157.5" x2="1604" y2="157.5" stroke="#4a4a4a" stroke-width="1"/>
<line x1="1090" y1="229.5" x2="1604" y2="229.5" stroke="#4a4a4a" stroke-width="1"/>
<line x1="1090" y1="301.5" x2="1604" y2="301.5" stroke="#4a4a4a" stroke-width="1"/>
<line x1="1090" y1="373.5" x2="1604" y2="373.5" stroke="#4a4a4a" stroke-width="1"/>
<line x1="1090" y1="445.5" x2="1604" y2="445.5" stroke="#4a4a4a" stroke-width="1"/>
<rect x="1090.5" y="88.5" width="513" height="365" fill="none" stroke="#a8a8a8" stroke-width="1"/>
<line x1="1141.5" y1="453" x2="1141.5" y2="448" stroke="#a8a8a8"/>
<line x1="1141.5" y1="89" x2="1141.5" y2="94" stroke="#a8a8a8"/>
<line x1="1193.5" y1="453" x2="1193.5" y2="448" stroke="#a8a8a8"/>
<line x1="1193.5" y1="89" x2="1193.5" y2="94" stroke="#a8a8a8"/>
<line x1="1244.5" y1="453" x2="1244.5" y2="448" stroke="#a8a8a8"/>
<line x1="1244.5" y1="89" x2="1244.5" y2="94" stroke="#a8a8a8"/>
<line x1="1295.5" y1="453" x2="1295.5" y2="448" stroke="#a8a8a8"/>
<line x1="1295.5" y1="89" x2="1295.5" y2="94" stroke="#a8a8a8"/>
<line x1="1346.5" y1="453" x2="1346.5" y2="448" stroke="#a8a8a8"/>
<line x1="1346.5" y1="89" x2="1346.5" y2="94" stroke="#a8a8a8"/>
<line x1="1398.5" y1="453" x2="1398.5" y2="448" stroke="#a8a8a8"/>
<line x1="1398.5" y1="89" x2="1398.5" y2="94" stroke="#a8a8a8"/>
<line x1="1449.5" y1="453" x2="1449.5" y2="448" stroke="#a8a8a8"/>
<line x1="1449.5" y1="89" x2="1449.5" y2="94" stroke="#a8a8a8"/>
<line x1="1500.5" y1="453" x2="1500.5" y2="448" stroke="#a8a8a8"/>
<line x1="1500.5" y1="89" x2="1500.5" y2="94" stroke="#a8a8a8"/>
<line x1="1552.5" y1="453" x2="1552.5" y2="448" stroke="#a8a8a8"/>
<line x1="1552.5" y1="89" x2="1552.5" y2="94" stroke="#a8a8a8"/>
<line x1="1091" y1="157.5" x2="1096" y2="157.5" stroke="#a8a8a8"/>
<line x1="1603" y1="157.5" x2="1598" y2="157.5" stroke="#a8a8a8"/>
<line x1="1091" y1="229.5" x2="1096" y2="229.5" stroke="#a8a8a8"/>
<line x1="1603" y1="229.5" x2="1598" y2="229.5" stroke="#a8a8a8"/>
<line x1="1091" y1="301.5" x2="1096" y2="301.5" stroke="#a8a8a8"/>
<line x1="1603" y1="301.5" x2="1598" y2="301.5" stroke="#a8a8a8"/>
<line x1="1091" y1="373.5" x2="1096" y2="373.5" stroke="#a8a8a8"/>
<line x1="1603" y1="373.5" x2="1598" y2="373.5" stroke="#a8a8a8"/>
<line x1="1091" y1="445.5" x2="1096" y2="445.5" stroke="#a8a8a8"/>
<line x1="1603" y1="445.5" x2="1598" y2="445.5" stroke="#a8a8a8"/>
<path d="M1090.5,418.2 L1603.5,125.7" fill="none" stroke="#f2f200" stroke-width="1.2"/>
<text x="1090.5" y="468.5" font-family="Liberation Sans" font-size="10.6" fill="#a5a5a5" text-anchor="middle" >0</text>
<text x="1141.8" y="468.5" font-family="Liberation Sans" font-size="10.6" fill="#a5a5a5" text-anchor="middle" >0.001</text>
<text x="1193.1" y="468.5" font-family="Liberation Sans" font-size="10.6" fill="#a5a5a5" text-anchor="middle" >0.002</text>
<text x="1244.4" y="468.5" font-family="Liberation Sans" font-size="10.6" fill="#a5a5a5" text-anchor="middle" >0.003</text>
<text x="1295.7" y="468.5" font-family="Liberation Sans" font-size="10.6" fill="#a5a5a5" text-anchor="middle" >0.004</text>
<text x="1347.0" y="468.5" font-family="Liberation Sans" font-size="10.6" fill="#a5a5a5" text-anchor="middle" >0.005</text>
<text x="1398.3" y="468.5" font-family="Liberation Sans" font-size="10.6" fill="#a5a5a5" text-anchor="middle" >0.006</text>
<text x="1449.6" y="468.5" font-family="Liberation Sans" font-size="10.6" fill="#a5a5a5" text-anchor="middle" >0.007</text>
<text x="1500.9" y="468.5" font-family="Liberation Sans" font-size="10.6" fill="#a5a5a5" text-anchor="middle" >0.008</text>
<text x="1552.2" y="468.5" font-family="Liberation Sans" font-size="10.6" fill="#a5a5a5" text-anchor="middle" >0.009</text>
<text x="1603.5" y="468.5" font-family="Liberation Sans" font-size="10.6" fill="#a5a5a5" text-anchor="middle" >0.01</text>
<text x="1088" y="160.2" font-family="Liberation Sans" font-size="11" fill="#a5a5a5" text-anchor="end" >3205</text>
<text x="1088" y="232.2" font-family="Liberation Sans" font-size="11" fill="#a5a5a5" text-anchor="end" >3200</text>
<text x="1088" y="304.2" font-family="Liberation Sans" font-size="11" fill="#a5a5a5" text-anchor="end" >3195</text>
<text x="1088" y="376.2" font-family="Liberation Sans" font-size="11" fill="#a5a5a5" text-anchor="end" >3190</text>
<text x="1088" y="448.2" font-family="Liberation Sans" font-size="11" fill="#a5a5a5" text-anchor="end" >3185</text>
<text x="1064.5" y="492.6" font-family="Liberation Sans" font-size="10.7" fill="#000" text-anchor="start" stroke="#000" stroke-width="0.2">Ready</text>
<rect x="1430.5" y="480.5" width="74.5" height="17" fill="#f0f0f0" stroke="#d5d5d5"/>
<path d="M1430.5,497.5 L1430.5,480.5 L1505.0,480.5" fill="none" stroke="#c4c4c4"/>
<text x="1433" y="493" font-family="Liberation Sans" font-size="10.6" fill="#000" text-anchor="start" stroke="#000" stroke-width="0.2">Sample based</text>
<rect x="1508.5" y="480.5" width="63" height="17" fill="#f0f0f0" stroke="#d5d5d5"/>
<path d="M1508.5,497.5 L1508.5,480.5 L1571.5,480.5" fill="none" stroke="#c4c4c4"/>
<text x="1511" y="493" font-family="Liberation Sans" font-size="10.6" fill="#000" text-anchor="start" stroke="#000" stroke-width="0.2">Offset=1</text>
<rect x="1575.5" y="480.5" width="44" height="17" fill="#f0f0f0" stroke="#d5d5d5"/>
<path d="M1575.5,497.5 L1575.5,480.5 L1619.5,480.5" fill="none" stroke="#c4c4c4"/>
<text x="1578" y="493" font-family="Liberation Sans" font-size="10.6" fill="#000" text-anchor="start" stroke="#000" stroke-width="0.2">T=1.010</text>
<g filter="url(#fWin)"><path d="M1057.5,994.5 L1057.5,496.5 Q1057.5,489.5 1064.5,489.5 L1625,489.5 Q1632,489.5 1632,496.5 L1632,994.5 Q1632,1000.5 1626,1000.5 L1063.5,1000.5 Q1057.5,1000.5 1057.5,994.5 Z" fill="url(#gAeroV)" stroke="#59626e" stroke-width="1"/></g>
<rect x="1058.5" y="490.5" width="572.5" height="26" fill="url(#gAero)" opacity="0.8"/>
<rect x="1063.5" y="518.5" width="563" height="476" fill="none" stroke="#eef3f8" stroke-width="1"/>
<g transform="translate(1065,496)"><rect x="0.6" y="0.6" width="14.8" height="14.6" rx="1" fill="#f2f2f2" stroke="#8e98a4" stroke-width="1.1"/><rect x="1.2" y="1.2" width="13.6" height="1.8" fill="#7fb6e2"/><path d="M2,9.5 L7.5,5.8 L5.6,10.9 Z" fill="#3b86c8"/><path d="M7.5,5.8 L9.5,4 L8.6,8.2 L7.3,13.3 L5.6,10.9 Z" fill="#b8281c"/><path d="M9.5,4 L11.2,9.8 L9.6,11.6 L7.3,13.3 L8.6,8.2 Z" fill="#e8731f"/><path d="M9.5,4 L12.7,11.7 L11.2,9.8 Z" fill="#d0402a"/><path d="M9.4,4.6 L10,7.5 L9.2,8.5 Z" fill="#f2c531"/><path d="M6.6,12.2 L7.3,13.3 L8.2,12 Z" fill="#f2b531"/></g>
<text x="1086.5" y="507.5" font-family="Liberation Sans" font-size="12" fill="#000" text-anchor="start" >1</text>
<path d="M1523.5,489.5 L1523.5,505.5 Q1523.5,508.5 1526.5,508.5 L1622.5,508.5 Q1625.5,508.5 1625.5,505.5 L1625.5,489.5" fill="#d5dee9" stroke="#8a96a6" stroke-width="1"/>
<line x1="1551.5" y1="489.5" x2="1551.5" y2="508.5" stroke="#8a96a6" stroke-width="1"/>
<line x1="1578.5" y1="489.5" x2="1578.5" y2="508.5" stroke="#8a96a6" stroke-width="1"/>
<rect x="1532.5" y="499.7" width="11" height="4" rx="1" fill="#f2f2f2" stroke="#454c5a" stroke-width="1.2"/>
<rect x="1559.5" y="493.5" width="11" height="10" rx="1" fill="#f2f2f2" stroke="#454c5a" stroke-width="1.2"/>
<rect x="1562" y="496.5" width="6" height="4" fill="#d5dee9" stroke="#454c5a" stroke-width="1"/>
<path d="M1599.1,496.1 L1605.9,501.9 M1605.9,496.1 L1599.1,501.9" stroke="#454c5a" stroke-width="4.6" stroke-linecap="round"/>
<path d="M1599.1,496.1 L1605.9,501.9 M1605.9,496.1 L1599.1,501.9" stroke="#f4f4f4" stroke-width="2.2" stroke-linecap="round"/>
<rect x="1064" y="518" width="562" height="476" fill="#6e7378" />
<rect x="1065" y="519" width="560" height="25" fill="url(#gMenu)" />
<rect x="1065" y="544" width="560" height="1" fill="#a8a8a8" />
<rect x="1065" y="545" width="560" height="27" fill="#f0f0f0" />
<rect x="1065" y="545" width="560" height="1" fill="#fafafa" />
<rect x="1065" y="572" width="560" height="397" fill="#282828" />
<rect x="1065" y="969" width="560" height="24" fill="#f0f0f0" />
<rect x="1065" y="969" width="560" height="1" fill="#fdfdfd" />
<text x="1073" y="536" font-family="Liberation Sans" font-size="12" fill="#000" text-anchor="start" stroke="#000" stroke-width="0.15">File</text>
<text x="1108" y="536" font-family="Liberation Sans" font-size="12" fill="#000" text-anchor="start" stroke="#000" stroke-width="0.15">Tools</text>
<text x="1152.5" y="536" font-family="Liberation Sans" font-size="12" fill="#000" text-anchor="start" stroke="#000" stroke-width="0.15">View</text>
<text x="1193.5" y="536" font-family="Liberation Sans" font-size="12" fill="#000" text-anchor="start" stroke="#000" stroke-width="0.15">Simulation</text>
<text x="1266.5" y="536" font-family="Liberation Sans" font-size="12" fill="#000" text-anchor="start" stroke="#000" stroke-width="0.15">Help</text>
<path d="M1613.6,530.2 L1618.6,533" stroke="#000" stroke-width="1.7"/><path d="M1620.2,528.6 L1620.2,534.2 L1614.8,534.2 Z" fill="#000"/>
<path d="M1082.40,556.80 L1082.31,557.81 L1083.62,558.38 L1082.74,560.50 L1081.41,559.98 L1080.76,560.76 L1079.98,561.41 L1080.50,562.74 L1078.38,563.62 L1077.81,562.31 L1076.80,562.40 L1075.79,562.31 L1075.22,563.62 L1073.10,562.74 L1073.62,561.41 L1072.84,560.76 L1072.19,559.98 L1070.86,560.50 L1069.98,558.38 L1071.29,557.81 L1071.20,556.80 L1071.29,555.79 L1069.98,555.22 L1070.86,553.10 L1072.19,553.62 L1072.84,552.84 L1073.62,552.19 L1073.10,550.86 L1075.22,549.98 L1075.79,551.29 L1076.80,551.20 L1077.81,551.29 L1078.38,549.98 L1080.50,550.86 L1079.98,552.19 L1080.76,552.84 L1081.41,553.62 L1082.74,553.10 L1083.62,555.22 L1082.31,555.79 Z" fill="#a9a9a9" stroke="#3a3a3a" stroke-width="1" stroke-linejoin="round"/>
<circle cx="1076.8" cy="556.8" r="4.2" fill="#d4d4d4" stroke="#8a8a8a" stroke-width="0.6"/>
<circle cx="1076.8" cy="556.8" r="2.52" fill="#ffffff" stroke="#262626" stroke-width="1.3"/>
<path d="M1092.2,556 L1097.2,556 L1094.7,559 Z" fill="#111"/>
<line x1="1103.5" y1="548" x2="1103.5" y2="569" stroke="#a3a3a3" stroke-width="1"/>
<line x1="1203.5" y1="548" x2="1203.5" y2="569" stroke="#a3a3a3" stroke-width="1"/>
<line x1="1246.5" y1="548" x2="1246.5" y2="569" stroke="#a3a3a3" stroke-width="1"/>
<line x1="1289.5" y1="548" x2="1289.5" y2="569" stroke="#a3a3a3" stroke-width="1"/>
<line x1="1332.5" y1="548" x2="1332.5" y2="569" stroke="#a3a3a3" stroke-width="1"/>
<path d="M1112.6,556 L1120.7,550.4 L1120.7,560 Z" fill="#b6dcf3" stroke="#4a7aa6" stroke-width="1" stroke-linejoin="round"/>
<rect x="1122.4" y="550.2" width="2.4" height="7" fill="#cfe8f7" stroke="#2f5f8c" stroke-width="0.9"/>
<path d="M1125.84,559.10 L1125.78,559.79 L1126.68,560.18 L1126.07,561.64 L1125.16,561.28 L1124.72,561.82 L1124.18,562.26 L1124.54,563.17 L1123.08,563.78 L1122.69,562.88 L1122.00,562.94 L1121.31,562.88 L1120.92,563.78 L1119.46,563.17 L1119.82,562.26 L1119.28,561.82 L1118.84,561.28 L1117.93,561.64 L1117.32,560.18 L1118.22,559.79 L1118.16,559.10 L1118.22,558.41 L1117.32,558.02 L1117.93,556.56 L1118.84,556.92 L1119.28,556.38 L1119.82,555.94 L1119.46,555.03 L1120.92,554.42 L1121.31,555.32 L1122.00,555.26 L1122.69,555.32 L1123.08,554.42 L1124.54,555.03 L1124.18,555.94 L1124.72,556.38 L1125.16,556.92 L1126.07,556.56 L1126.68,558.02 L1125.78,558.41 Z" fill="#a9a9a9" stroke="#3a3a3a" stroke-width="1" stroke-linejoin="round"/>
<circle cx="1122" cy="559.1" r="2.88" fill="#d4d4d4" stroke="#8a8a8a" stroke-width="0.6"/>
<circle cx="1122" cy="559.1" r="1.728" fill="#ffffff" stroke="#262626" stroke-width="1.3"/>
<circle cx="1141.9" cy="556.4" r="7.3" fill="url(#gPlay)" stroke="#3b6e1c" stroke-width="1.3"/>
<path d="M1140.1,553.7 L1144.6,556.8 L1140.1,560.1 Z" fill="#262626"/>
<rect x="1159.5" y="551.3" width="2.2" height="11.2" fill="#a9d3ef" stroke="#27476a" stroke-width="1"/>
<path d="M1163.6,551.4 L1171.6,556.8 L1163.6,562.4 Z" fill="#b3daf3" stroke="#2c5278" stroke-width="1" stroke-linejoin="round"/>
<circle cx="1187.9" cy="556.9" r="8" fill="#a7a7a7"/>
<rect x="1185.1" y="554.1" width="5.8" height="5.8" fill="#8f8f8f"/>
<rect x="1213.2" y="549.2" width="7.6" height="6.3" rx="1.5" fill="#fff1a8" opacity="0.8"/>
<rect x="1214.5" y="550.5" width="5" height="3.8" fill="#f3b070" stroke="#c8501a" stroke-width="1.2"/>
<path d="M1212.2,552.4 L1214,552.4" stroke="#222" stroke-width="1"/>
<path d="M1220,552.4 L1223.8,552.4 L1223.8,555.4" fill="none" stroke="#c8501a" stroke-width="1"/>
<rect x="1221.6" y="555.7" width="3.5" height="2.6" rx="1.2" fill="#fff" stroke="#333" stroke-width="1"/>
<path d="M1225.3,557.2 L1227.7,557.2" stroke="#333" stroke-width="1"/>
<rect x="1214.6" y="559.6" width="5" height="3.8" fill="#f4f4f4" stroke="#333" stroke-width="1.1"/>
<path d="M1212.2,560.6 L1214.2,560.6 M1219.8,560.6 L1223.6,560.6 L1223.6,558.5" fill="none" stroke="#333" stroke-width="1"/>
<path d="M1235.2,556.2 L1240.2,556.2 L1237.7,559.2 Z" fill="#111"/>
<circle cx="1261.3" cy="555.4" r="4.9" fill="#f2f6fa" stroke="#333" stroke-width="1.3"/>
<path d="M1258.9,555.4 L1263.7,555.4 M1261.3,553 L1261.3,557.8" stroke="#000" stroke-width="1.2"/>
<path d="M1265.4,559.7 L1268.6,562.8" stroke="#222" stroke-width="3.2" stroke-linecap="round"/>
<path d="M1278.2,556.2 L1283.2,556.2 L1280.7,559.2 Z" fill="#111"/>
<rect x="1299" y="550" width="14.2" height="14" fill="url(#gScale)" stroke="#2e2e2e" stroke-width="1.6"/>
<path d="M1305.9,551.2 L1305.9,554.8 M1305.9,559.2 L1305.9,562.6" stroke="#8a8a8a" stroke-width="1.2"/>
<path d="M1303.2,552.8 L1305.9,550.4 L1308.6,552.8 M1303.2,561.2 L1305.9,563.5 L1308.6,561.2" fill="none" stroke="#222" stroke-width="1.3"/>
<path d="M1321.2,556.2 L1326.2,556.2 L1323.7,559.2 Z" fill="#111"/>
<path d="M1341.9,562.5 L1347.4,562.5 L1347.4,550.4 L1353.3,550.4" fill="none" stroke="#111" stroke-width="2.7"/>
<path d="M1343.2,557.2 L1347.4,553.4 L1351.6,557.2" fill="none" stroke="#111" stroke-width="2.7"/>
<path d="M1342.6,562.5 L1347.4,562.5 L1347.4,550.4 L1352.6,550.4 M1343.9,557 L1347.4,553.9 L1350.9,557" fill="none" stroke="#8e8e96" stroke-width="0.9"/>
<rect x="1364.9" y="550" width="14.2" height="14" fill="url(#gScale)" stroke="#6e6e6e" stroke-width="1.5"/>
<path d="M1367.6,562 L1377.6,552.2" stroke="#1e1e1e" stroke-width="6" stroke-dasharray="1 0.6"/>
<path d="M1367.6,562 L1377.6,552.2" stroke="#a6d6f1" stroke-width="4.4"/>
<path d="M1370.5,560.2 L1371.8,561.4 M1372.9,557.8 L1374.2,559 M1375.3,555.4 L1376.6,556.6" stroke="#222" stroke-width="0.9"/>
<path d="M1387.2,556.2 L1392.2,556.2 L1389.7,559.2 Z" fill="#111"/>
<rect x="1611.5" y="574.5" width="12" height="9" fill="none" stroke="#fff" stroke-width="1"/>
<path d="M1612,576.5 L1623,576.5" stroke="#fff"/><path d="M1615,581 L1617.5,578.5 L1620,581 M1617.5,579 L1617.5,583" fill="none" stroke="#fff" stroke-width="1.2"/>
<rect x="1080" y="582" width="526" height="366" fill="#000" />
<line x1="1132.5" y1="582" x2="1132.5" y2="948" stroke="#4a4a4a" stroke-width="1"/>
<line x1="1185.5" y1="582" x2="1185.5" y2="948" stroke="#4a4a4a" stroke-width="1"/>
<line x1="1238.5" y1="582" x2="1238.5" y2="948" stroke="#4a4a4a" stroke-width="1"/>
<line x1="1290.5" y1="582" x2="1290.5" y2="948" stroke="#4a4a4a" stroke-width="1"/>
<line x1="1342.5" y1="582" x2="1342.5" y2="948" stroke="#4a4a4a" stroke-width="1"/>
<line x1="1395.5" y1="582" x2="1395.5" y2="948" stroke="#4a4a4a" stroke-width="1"/>
<line x1="1448.5" y1="582" x2="1448.5" y2="948" stroke="#4a4a4a" stroke-width="1"/>
<line x1="1500.5" y1="582" x2="1500.5" y2="948" stroke="#4a4a4a" stroke-width="1"/>
<line x1="1552.5" y1="582" x2="1552.5" y2="948" stroke="#4a4a4a" stroke-width="1"/>
<line x1="1080" y1="911.5" x2="1606" y2="911.5" stroke="#4a4a4a" stroke-width="1"/>
<line x1="1080" y1="846.5" x2="1606" y2="846.5" stroke="#4a4a4a" stroke-width="1"/>
<line x1="1080" y1="781.5" x2="1606" y2="781.5" stroke="#4a4a4a" stroke-width="1"/>
<line x1="1080" y1="715.5" x2="1606" y2="715.5" stroke="#4a4a4a" stroke-width="1"/>
<line x1="1080" y1="650.5" x2="1606" y2="650.5" stroke="#4a4a4a" stroke-width="1"/>
<line x1="1080" y1="584.5" x2="1606" y2="584.5" stroke="#4a4a4a" stroke-width="1"/>
<rect x="1080.5" y="582.5" width="525" height="365" fill="none" stroke="#a8a8a8" stroke-width="1"/>
<line x1="1132.5" y1="947" x2="1132.5" y2="942" stroke="#a8a8a8"/>
<line x1="1132.5" y1="583" x2="1132.5" y2="588" stroke="#a8a8a8"/>
<line x1="1185.5" y1="947" x2="1185.5" y2="942" stroke="#a8a8a8"/>
<line x1="1185.5" y1="583" x2="1185.5" y2="588" stroke="#a8a8a8"/>
<line x1="1238.5" y1="947" x2="1238.5" y2="942" stroke="#a8a8a8"/>
<line x1="1238.5" y1="583" x2="1238.5" y2="588" stroke="#a8a8a8"/>
<line x1="1290.5" y1="947" x2="1290.5" y2="942" stroke="#a8a8a8"/>
<line x1="1290.5" y1="583" x2="1290.5" y2="588" stroke="#a8a8a8"/>
<line x1="1342.5" y1="947" x2="1342.5" y2="942" stroke="#a8a8a8"/>
<line x1="1342.5" y1="583" x2="1342.5" y2="588" stroke="#a8a8a8"/>
<line x1="1395.5" y1="947" x2="1395.5" y2="942" stroke="#a8a8a8"/>
<line x1="1395.5" y1="583" x2="1395.5" y2="588" stroke="#a8a8a8"/>
<line x1="1448.5" y1="947" x2="1448.5" y2="942" stroke="#a8a8a8"/>
<line x1="1448.5" y1="583" x2="1448.5" y2="588" stroke="#a8a8a8"/>
<line x1="1500.5" y1="947" x2="1500.5" y2="942" stroke="#a8a8a8"/>
<line x1="1500.5" y1="583" x2="1500.5" y2="588" stroke="#a8a8a8"/>
<line x1="1552.5" y1="947" x2="1552.5" y2="942" stroke="#a8a8a8"/>
<line x1="1552.5" y1="583" x2="1552.5" y2="588" stroke="#a8a8a8"/>
<line x1="1081" y1="911.5" x2="1086" y2="911.5" stroke="#a8a8a8"/>
<line x1="1605" y1="911.5" x2="1600" y2="911.5" stroke="#a8a8a8"/>
<line x1="1081" y1="846.5" x2="1086" y2="846.5" stroke="#a8a8a8"/>
<line x1="1605" y1="846.5" x2="1600" y2="846.5" stroke="#a8a8a8"/>
<line x1="1081" y1="781.5" x2="1086" y2="781.5" stroke="#a8a8a8"/>
<line x1="1605" y1="781.5" x2="1600" y2="781.5" stroke="#a8a8a8"/>
<line x1="1081" y1="715.5" x2="1086" y2="715.5" stroke="#a8a8a8"/>
<line x1="1605" y1="715.5" x2="1600" y2="715.5" stroke="#a8a8a8"/>
<line x1="1081" y1="650.5" x2="1086" y2="650.5" stroke="#a8a8a8"/>
<line x1="1605" y1="650.5" x2="1600" y2="650.5" stroke="#a8a8a8"/>
<line x1="1081" y1="584.5" x2="1086" y2="584.5" stroke="#a8a8a8"/>
<line x1="1605" y1="584.5" x2="1600" y2="584.5" stroke="#a8a8a8"/>
<polyline points="1080.50,911.80 1083.12,906.58 1085.75,901.46 1088.38,896.42 1091.00,891.47 1093.62,886.60 1096.25,881.82 1098.88,877.13 1101.50,872.51 1104.12,867.97 1106.75,863.52 1109.38,859.14 1112.00,854.83 1114.62,850.60 1117.25,846.45 1119.88,842.37 1122.50,838.35 1125.12,834.41 1127.75,830.53 1130.38,826.73 1133.00,822.99 1135.62,819.31 1138.25,815.70 1140.88,812.15 1143.50,808.66 1146.12,805.23 1148.75,801.86 1151.38,798.55 1154.00,795.30 1156.62,792.10 1159.25,788.96 1161.88,785.87 1164.50,782.84 1167.12,779.86 1169.75,776.93 1172.38,774.06 1175.00,771.23 1177.62,768.45 1180.25,765.72 1182.88,763.04 1185.50,760.40 1188.12,757.81 1190.75,755.26 1193.38,752.76 1196.00,750.30 1198.62,747.89 1201.25,745.51 1203.88,743.18 1206.50,740.89 1209.12,738.64 1211.75,736.42 1214.38,734.25 1217.00,732.11 1219.62,730.01 1222.25,727.95 1224.88,725.92 1227.50,723.93 1230.12,721.97 1232.75,720.04 1235.38,718.15 1238.00,716.30 1240.62,714.47 1243.25,712.68 1245.88,710.91 1248.50,709.18 1251.12,707.48 1253.75,705.80 1256.38,704.16 1259.00,702.55 1261.62,700.96 1264.25,699.40 1266.88,697.87 1269.50,696.36 1272.12,694.88 1274.75,693.43 1277.38,692.00 1280.00,690.59 1282.62,689.21 1285.25,687.86 1287.88,686.52 1290.50,685.22 1293.12,683.93 1295.75,682.66 1298.38,681.42 1301.00,680.20 1303.62,679.00 1306.25,677.82 1308.88,676.66 1311.50,675.53 1314.12,674.41 1316.75,673.31 1319.38,672.23 1322.00,671.17 1324.62,670.12 1327.25,669.10 1329.88,668.09 1332.50,667.10 1335.12,666.13 1337.75,665.18 1340.38,664.24 1343.00,663.31 1345.62,662.41 1348.25,661.52 1350.88,660.64 1353.50,659.78 1356.12,658.94 1358.75,658.10 1361.38,657.29 1364.00,656.49 1366.62,655.70 1369.25,654.92 1371.88,654.16 1374.50,653.41 1377.12,652.68 1379.75,651.96 1382.38,651.25 1385.00,650.55 1387.62,649.87 1390.25,649.19 1392.88,648.53 1395.50,647.88 1398.12,647.24 1400.75,646.61 1403.38,646.00 1406.00,645.39 1408.62,644.79 1411.25,644.21 1413.88,643.63 1416.50,643.07 1419.12,642.51 1421.75,641.97 1424.38,641.43 1427.00,640.90 1429.62,640.39 1432.25,639.88 1434.88,639.38 1437.50,638.89 1440.12,638.40 1442.75,637.93 1445.38,637.46 1448.00,637.00 1450.62,636.55 1453.25,636.11 1455.88,635.68 1458.50,635.25 1461.12,634.83 1463.75,634.42 1466.38,634.01 1469.00,633.61 1471.62,633.22 1474.25,632.84 1476.88,632.46 1479.50,632.09 1482.12,631.72 1484.75,631.37 1487.38,631.01 1490.00,630.67 1492.62,630.33 1495.25,629.99 1497.88,629.66 1500.50,629.34 1503.12,629.02 1505.75,628.71 1508.38,628.41 1511.00,628.10 1513.62,627.81 1516.25,627.52 1518.88,627.23 1521.50,626.95 1524.12,626.68 1526.75,626.40 1529.38,626.14 1532.00,625.88 1534.62,625.62 1537.25,625.37 1539.88,625.12 1542.50,624.87 1545.12,624.63 1547.75,624.40 1550.38,624.17 1553.00,623.94 1555.62,623.72 1558.25,623.50 1560.88,623.28 1563.50,623.07 1566.12,622.86 1568.75,622.66 1571.38,622.45 1574.00,622.26 1576.62,622.06 1579.25,621.87 1581.88,621.68 1584.50,621.50 1587.12,621.32 1589.75,621.14 1592.38,620.96 1595.00,620.79 1597.62,620.62 1600.25,620.46 1602.88,620.29 1605.50,620.13" fill="none" stroke="#f2f200" stroke-width="1.2"/>
<text x="1080.5" y="961" font-family="Liberation Sans" font-size="10.6" fill="#a5a5a5" text-anchor="middle" >0</text>
<text x="1133.0" y="961" font-family="Liberation Sans" font-size="10.6" fill="#a5a5a5" text-anchor="middle" >0.001</text>
<text x="1185.5" y="961" font-family="Liberation Sans" font-size="10.6" fill="#a5a5a5" text-anchor="middle" >0.002</text>
<text x="1238.0" y="961" font-family="Liberation Sans" font-size="10.6" fill="#a5a5a5" text-anchor="middle" >0.003</text>
<text x="1290.5" y="961" font-family="Liberation Sans" font-size="10.6" fill="#a5a5a5" text-anchor="middle" >0.004</text>
<text x="1343.0" y="961" font-family="Liberation Sans" font-size="10.6" fill="#a5a5a5" text-anchor="middle" >0.005</text>
<text x="1395.5" y="961" font-family="Liberation Sans" font-size="10.6" fill="#a5a5a5" text-anchor="middle" >0.006</text>
<text x="1448.0" y="961" font-family="Liberation Sans" font-size="10.6" fill="#a5a5a5" text-anchor="middle" >0.007</text>
<text x="1500.5" y="961" font-family="Liberation Sans" font-size="10.6" fill="#a5a5a5" text-anchor="middle" >0.008</text>
<text x="1553.0" y="961" font-family="Liberation Sans" font-size="10.6" fill="#a5a5a5" text-anchor="middle" >0.009</text>
<text x="1605.5" y="961" font-family="Liberation Sans" font-size="10.6" fill="#a5a5a5" text-anchor="middle" >0.01</text>
<text x="1078" y="914.8" font-family="Liberation Sans" font-size="11" fill="#a5a5a5" text-anchor="end" >0</text>
<text x="1078" y="849.8" font-family="Liberation Sans" font-size="11" fill="#a5a5a5" text-anchor="end" >2</text>
<text x="1078" y="784.8" font-family="Liberation Sans" font-size="11" fill="#a5a5a5" text-anchor="end" >4</text>
<text x="1078" y="718.8" font-family="Liberation Sans" font-size="11" fill="#a5a5a5" text-anchor="end" >6</text>
<text x="1078" y="653.8" font-family="Liberation Sans" font-size="11" fill="#a5a5a5" text-anchor="end" >8</text>
<text x="1078" y="587.8" font-family="Liberation Sans" font-size="11" fill="#a5a5a5" text-anchor="end" >10</text>
<text x="1066.5" y="985.6" font-family="Liberation Sans" font-size="10.7" fill="#000" text-anchor="start" stroke="#000" stroke-width="0.2">Ready</text>
<rect x="1449.0" y="973.5" width="74.0" height="17" fill="#f0f0f0" stroke="#d5d5d5"/>
<path d="M1449.0,990.5 L1449.0,973.5 L1523.0,973.5" fill="none" stroke="#c4c4c4"/>
<text x="1451.5" y="986" font-family="Liberation Sans" font-size="10.6" fill="#000" text-anchor="start" stroke="#000" stroke-width="0.2">Sample based</text>
<rect x="1526.5" y="973.5" width="47" height="17" fill="#f0f0f0" stroke="#d5d5d5"/>
<path d="M1526.5,990.5 L1526.5,973.5 L1573.5,973.5" fill="none" stroke="#c4c4c4"/>
<text x="1529" y="986" font-family="Liberation Sans" font-size="10.6" fill="#000" text-anchor="start" stroke="#000" stroke-width="0.2">Offset=1</text>
<rect x="1577.5" y="973.5" width="44" height="17" fill="#f0f0f0" stroke="#d5d5d5"/>
<path d="M1577.5,990.5 L1577.5,973.5 L1621.5,973.5" fill="none" stroke="#c4c4c4"/>
<text x="1580" y="986" font-family="Liberation Sans" font-size="10.6" fill="#000" text-anchor="start" stroke="#000" stroke-width="0.2">T=1.010</text>
</svg></body></html>
